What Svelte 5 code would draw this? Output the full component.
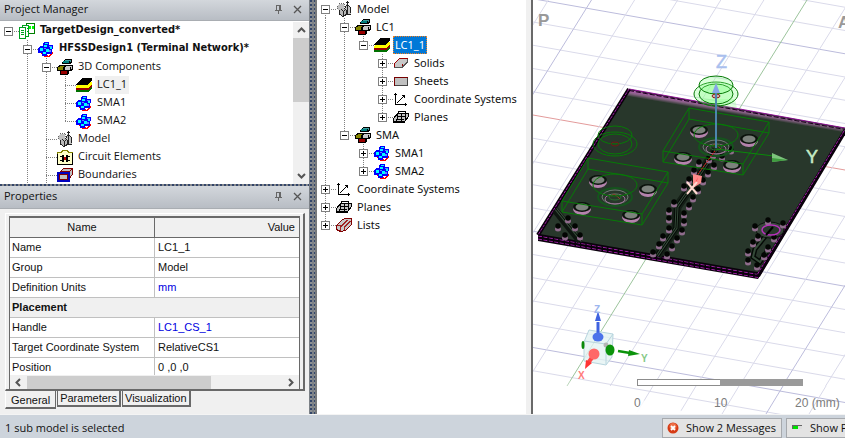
<script>
  const projectTree = [
    {
      label: 'TargetDesign_converted*', icon: 'project', open: true, bold: true, children: [
        {
          label: 'HFSSDesign1 (Terminal Network)*', icon: 'cubes', open: true, bold: true, more: true, children: [
            {
              label: '3D Components', icon: 'components', open: true, children: [
                { label: 'LC1_1', icon: 'layers', mark: 'soft' },
                { label: 'SMA1', icon: 'cubes' },
                { label: 'SMA2', icon: 'cubes' }
              ]
            },
            { label: 'Model', icon: 'model' },
            { label: 'Circuit Elements', icon: 'circuit' },
            { label: 'Boundaries', icon: 'boundary', more: true }
          ]
        }
      ]
    }
  ];

  const modelTree = [
    {
      label: 'Model', icon: 'model', open: true, children: [
        {
          label: 'LC1', icon: 'components', open: true, children: [
            {
              label: 'LC1_1', icon: 'layers', open: true, mark: 'selected', children: [
                { label: 'Solids', icon: 'solid', open: false },
                { label: 'Sheets', icon: 'sheet', open: false },
                { label: 'Coordinate Systems', icon: 'axes', open: false },
                { label: 'Planes', icon: 'planes', open: false }
              ]
            }
          ]
        },
        {
          label: 'SMA', icon: 'components', open: true, children: [
            { label: 'SMA1', icon: 'cubes', open: false },
            { label: 'SMA2', icon: 'cubes', open: false }
          ]
        }
      ]
    },
    { label: 'Coordinate Systems', icon: 'axes', open: false },
    { label: 'Planes', icon: 'planes', open: false },
    { label: 'Lists', icon: 'lists', open: false }
  ];

  // Turns a nested tree into rows, each with the guide line of every indent column.
  function flatten(nodes, guides = []) {
    return nodes.flatMap((node, i) => {
      const hasNext = i < nodes.length - 1 || node.more;
      const hasPrev = i > 0 || guides.length > 0;
      const own = hasNext ? (hasPrev ? 'full' : 'lower') : hasPrev ? 'upper' : 'none';
      return [
        { ...node, cells: [...guides, own] },
        ...flatten(node.children ?? [], [...guides, hasNext ? 'full' : 'none'])
      ];
    });
  }

  const projectRows = flatten(projectTree);
  const modelRows = flatten(modelTree);

  const properties = [
    { name: 'Name', value: 'LC1_1' },
    { name: 'Group', value: 'Model' },
    { name: 'Definition Units', value: 'mm', link: true },
    { group: 'Placement' },
    { name: 'Handle', value: 'LC1_CS_1', link: true },
    { name: 'Target Coordinate System', value: 'RelativeCS1' },
    { name: 'Position', value: '0 ,0 ,0' }
  ];

  const tabs = ['General', 'Parameters', 'Visualization'];
  let activeTab = $state('General');

  const range = (from, to) => Array.from({ length: to - from + 1 }, (_, i) => from + i);
  const rowLines = range(-10, 11).map((k) => ({ y: 115 + 23.25 * k, major: k % 5 === 0, axis: k === 0 }));
  const colLines = range(-6, 7).map((k) => ({ x: 807 + 43.1 * k, major: k % 5 === 0, axis: k === 0 }));

  const vias = [
    [699, 163], [694, 171], [689, 180], [684, 187], [674, 203], [669, 211], [669, 219], [669, 229], [663, 237],
    [659, 245], [653, 253], [709, 159], [714, 166], [708, 173], [703, 181], [698, 190], [693, 198], [689, 206],
    [684, 214], [684, 222], [682, 231], [677, 239], [672, 247], [667, 255], [568, 219], [558, 227], [575, 227],
    [565, 236], [580, 236], [755, 227], [768, 221], [783, 224], [758, 237], [753, 243], [748, 252], [748, 261],
    [774, 238], [768, 248], [764, 256], [757, 266], [731, 150], [722, 157], [713, 155]
  ];
  const pins = [[699, 131], [749, 140], [683, 158], [732, 166]];
</script>

{#snippet icon(name)}
  <svg class="icon" viewBox="0 0 16 16" shape-rendering="crispEdges" aria-hidden="true">
    {#if name === 'project'}
      <path d="M7.500 .5h8v10h-8z" fill="#fff" stroke="#008000" />
      <path d="M10 3h2v3h-2zM13 3h2v3h-2z" fill="#0f0" />
      <path d="M3.500 2.500h6v11h-6z" fill="#fff" stroke="#00a020" />
      <path d="M.5 4.500h6v11h-6z" fill="#fff" stroke="#00a020" />
      <path d="M2 7.500h3M2 9.500h3M2 11.500h3M8 5.500h1M8 8.500h1" stroke="#00a020" />
    {:else if name === 'cubes'}
      <path d="M2 11l5 4 2-1 2 1 4-5v3l-4 3H6z" fill="#f00" />
      <path d="M6 1h5v3h4v4h-1v5H9v2H4v-3H0V7l2-2h3V2z" fill="#00f" />
      <path d="M7 2h3v1H7zM6 4h3v2H6zM2 7h3v3H2zM8 8h3v3H8zM5 11h3v2H5zM12 6h2v2h-2z" fill="#0ff" />
      <path d="M11 5h3v1h-3zM6 7h2v1H6zM11 9h2v2h-2z" fill="#5b8cff" />
    {:else if name === 'components'}
      <path d="M5 3l3-3h7v3l-2 2H5z" fill="#000" /><path d="M6 2h6v2H6z" fill="#008080" /><path d="M8 1h6v1H8zM13 2h1v1h-1z" fill="#40a0a0" />
      <path d="M0 8l2-2h14v4l-2 2H0z" fill="#000" />
      <path d="M1 8h5v3H1zM3 7h4v1H3z" fill="#858500" /><path d="M8 8h5v3H8zM9 7h6v1H9zM14 8h1v2h-1z" fill="#c8c8c8" />
      <path d="M3 12h9v2l-2 2H3z" fill="#000" /><path d="M4 12h6v3H4z" fill="#900" />
    {:else if name === 'layers'}
      <path d="M0 14l4-5h12v2l-4 4H0z" fill="#007000" />
      <path d="M0 12l4-5h12v2l-4 4H0z" fill="#900" />
      <path d="M0 10l4-5h12v2l-4 4H0z" fill="#ff0" />
      <path d="M0 8l6-7h10v3l-5 4H0z" fill="#000" />
    {:else if name === 'model'}
      <path d="M1 5l2-2h5v6l-4 2-3-3z" fill="#c0c0c0" />
      <path d="M1.500 8V4.500M3 2.500h5M8.500 3v4" fill="none" stroke="#666" stroke-dasharray="1 1" />
      <path d="M11 2l4 7v4H9V8z" fill="#c4c4c4" />
      <path d="M3 9l3-2 4 2v5l-3 2-4-3z" fill="#b8b8b8" />
      <path d="M11.500 0v13M10 1.500h3M14.500 6v6M12.500 4l2 3M10.500 4l-2 4M5.500 8.500l2 2 2-2M7.500 10v5M3.500 9v4l3 2.500 4-2V9M11 13.500h4" fill="none" stroke="#222" />
    {:else if name === 'circuit'}
      <path d="M.5 3.500h4l1-2h5l1 2h4v12H.5z" fill="#ffffc8" stroke="#808000" />
      <path d="M1 15.500h14.500V4M.5 5v11" fill="none" stroke="#000" />
      <path d="M5 6h2v7H5zM9 6h2v7H9z" fill="#000" />
      <path d="M3 7.500h3M3 11.500h3M10 7.500h3M10 11.500h3" stroke="#000" /><path d="M7 8h2v3H7z" fill="#b00" />
    {:else if name === 'boundary'}
      <path d="M3.500 5l3-3.500h9v6l-3 3.500" fill="#c0c0c0" stroke="#800000" />
      <path d="M5 4.500h7.500v2M12.500 4.500l3-3" fill="none" stroke="#800000" />
      <path d="M1 6h11v8H1z" fill="#c0c0c0" stroke="#0000c0" stroke-width="2" />
      <path d="M2.500 7.500h8v5h-8z" fill="none" stroke="#800000" />
    {:else if name === 'solid'}
      <path d="M1 13V9l6-6h8v4l-6 6z" fill="#c8c8c8" />
      <path d="M1.500 13V8.500l5-5h8M9.500 12V9" fill="none" stroke="#900" /><path d="M1 12.500h8l5.500-5.500V3.500" fill="none" stroke="#555" />
    {:else if name === 'sheet'}
      <path d="M1.500 4.500h13v8h-13z" fill="#c0c0c0" stroke="#700" /><path d="M2 12.500h12.500V5" fill="none" stroke="#444" />
    {:else if name === 'axes'}
      <path d="M2.500 2v11.500H14M3.500 12.500l8-8" fill="none" stroke="#000" />
      <path d="M1 3h3v1H1zM12 12h1v3h-1zM9 4h3v3h-1V5H9z" fill="#000" />
    {:else if name === 'planes'}
      <path d="M.5 9.500l4-5h11v3l-4 5.500h-11z" fill="#c4c4c4" stroke="#000" />
      <path d="M.5 12.500h11l4-5M3.500 7.500h9M5.500 2.500h7v9M5.500 2.500l-2 10M3 10.500h8M8.500 5v8" fill="none" stroke="#000" />
    {:else if name === 'lists'}
      <path d="M.5 8.500l6-6 3-1h6v6l-6 6-5 1-4-2z" fill="#c8c8c8" stroke="#800000" />
      <path d="M4.500 14v-4l7-7M8.500 13v-3l6-6M1 8.500h6" fill="none" stroke="#a02020" />
    {/if}
  </svg>
{/snippet}

{#snippet tree(rows)}
  <ul class="rows">
    {#each rows as row}
      <li>
        {#each row.cells as cell, i}
          <span class="cell {cell}" class:own={i === row.cells.length - 1}>
            {#if i === row.cells.length - 1 && row.open !== undefined}
              <button class="expander" class:closed={!row.open} aria-label="Toggle {row.label}"></button>
            {/if}
          </span>
        {/each}
        {@render icon(row.icon)}
        <span class="label {row.mark ?? ''}" class:bold={row.bold}>{row.label}</span>
      </li>
    {/each}
  </ul>
{/snippet}

{#snippet titleBar(title)}
  <header>
    <h2>{title}</h2>
    <button aria-label="Pin {title}">
      <svg viewBox="0 0 9 9" shape-rendering="crispEdges"><path d="M2.500 5V.5h4V5M5.500 1v4M1 5.500h7M4.500 6v3" fill="none" stroke="#666" /></svg>
    </button>
    <button aria-label="Close {title}">
      <svg viewBox="0 0 9 9"><path d="M1 1l7 7M8 1L1 8" stroke="#555" stroke-width="1.300" /></svg>
    </button>
  </header>
{/snippet}

{#snippet chevron(d)}
  <svg class="chevron" viewBox="0 0 9 9" aria-hidden="true"><path {d} fill="none" stroke="#555" stroke-width="2" /></svg>
{/snippet}

{#snippet wireBox()}
  <path d="M689 108l80 14v11l-80-14zM663 151l80 13v11l-80-13zM689 108l-26 43M769 122l-26 42M689 119l-26 43M769 133l-26 42" />
  <ellipse cx="716" cy="135" rx="22" ry="11" />
{/snippet}

{#snippet connector()}
  {#each pins as [x, y]}
    <ellipse cx={x} cy={y + 1} rx="9" ry="6" fill="#b583ad" />
    <ellipse cx={x} cy={y - 1} rx="9" ry="5" fill="#0c130d" />
    <ellipse cx={x} cy={y - 1} rx="6.500" ry="3.500" fill="#7c827c" />
  {/each}
  <g fill="none">
    <ellipse cx="716" cy="147" rx="17" ry="9" stroke="#15541d" stroke-width="2" />
    <ellipse cx="716" cy="147" rx="13" ry="7" stroke="#6f7d73" />
    <ellipse cx="716" cy="149" rx="10" ry="5" stroke="#a06f9a" />
    <ellipse cx="716" cy="147" rx="6" ry="3" stroke="#2a6b30" />
  </g>
  <path d="M712 146l3-2 4 3 2 2" fill="none" stroke="#8c3b2c" />
  <g fill="none" stroke="#067a06">{@render wireBox()}</g>
{/snippet}

<div class="app">
  <main>
    <div class="side">
      <section class="project">
        {@render titleBar('Project Manager')}
        <div class="project-body">
          {@render tree(projectRows)}
          <div class="vscroll">
            {@render chevron('M1 6l3.500-3.500L8 6')}
            <div class="track"><div class="thumb"></div></div>
            {@render chevron('M1 3l3.500 3.500L8 3')}
          </div>
        </div>
      </section>

      <div class="hsplit"></div>

      <section class="properties">
        {@render titleBar('Properties')}
        <div class="sheet">
          <div class="frame">
            <div class="grid">
              <div class="clip">
                <table>
                  <thead>
                    <tr><th scope="col" class="name">Name</th><th scope="col" class="value">Value</th></tr>
                  </thead>
                  <tbody>
                    {#each properties as p}
                      {#if p.group}
                        <tr class="group"><th scope="rowgroup" colspan="2">{p.group}</th></tr>
                      {:else}
                        <tr><td>{p.name}</td><td class:link={p.link}>{p.value}</td></tr>
                      {/if}
                    {/each}
                  </tbody>
                </table>
              </div>
              <div class="hscroll">
                {@render chevron('M6 1L2.500 4.500 6 8')}
                <div class="track"><div class="thumb"></div></div>
                {@render chevron('M3 1l3.500 3.500L3 8')}
              </div>
            </div>
          </div>
          <div class="tabs" role="tablist">
            {#each tabs as tab}
              <button role="tab" aria-selected={tab === activeTab} class:active={tab === activeTab} onclick={() => (activeTab = tab)}>{tab}</button>
            {/each}
          </div>
        </div>
      </section>
    </div>

    <div class="vsplit"></div>

    <nav class="model" aria-label="Model tree">{@render tree(modelRows)}</nav>

    <svg class="view" viewBox="533 0 312 414" preserveAspectRatio="xMinYMin slice" role="img" aria-label="3D model view">
      <defs>
        <linearGradient id="rear" gradientUnits="userSpaceOnUse" x1="740" y1="109" x2="739" y2="115">
          <stop offset="0" stop-color="#b060b0" /><stop offset=".5" stop-color="#80607e" /><stop offset="1" stop-color="#28372b" />
        </linearGradient>
        <linearGradient id="fade" x1="0" y1="0" x2="0" y2="1">
          <stop offset="0" stop-color="#fff" stop-opacity="0" /><stop offset="1" stop-color="#fff" />
        </linearGradient>
      </defs>

      <g fill="none">
        {#each rowLines as l}
          <path d="M533 {l.y}l312 55" stroke={l.axis ? '#e39b9b' : l.major ? '#bcbcdc' : '#dadaea'} />
        {/each}
        {#each colLines as l}
          <path d="M{l.x} 0L{l.x - 240} 386" stroke={l.axis ? '#9cc49c' : l.major ? '#bcbcdc' : '#dadaea'} />
        {/each}
        <path d="M653 386l-17 28M696 386l-17 28M739 386l-17 28M826 386l-17 28" stroke="#dadaea" />
        <path d="M783 386l-17 28" stroke="#bcbcdc" />
      </g>
      <path d="M533 370l160 44H533z" fill="url(#fade)" />

      <g font-family="Liberation Sans, Arial, sans-serif" font-weight="bold" font-size="17" fill="#999">
        <text x="538" y="26">P</text><text x="838" y="28">A</text>
      </g>

      <path d="M629 89l216 39v5l-87 146-220-38v-6z" fill="#0a000c" />
      <path d="M629 90l216 38v4l-87 142-220-39z" fill="#28372b" />
      <path d="M629 90l216 39v7L627 96z" fill="url(#rear)" />
      <path d="M538 236l220 38.500M538 239l220 38.500" stroke="#a01fa6" stroke-dasharray="4 1.500" fill="none" />
      <path d="M538 237.500l220 38.500M538 234.500l220 38.500" stroke="#0a000c" stroke-width="1.500" fill="none" />
      <path d="M629 89l216 39" stroke="#8c0f92" fill="none" /><path d="M629 90.500l216 39" stroke="#170019" stroke-dasharray="5 2" fill="none" />
      <path d="M629 89l-91 146M845 131l-87 145" stroke="#0a000c" stroke-width="4" fill="none" />
      <path d="M629 89l-91 146M844 131l-87 144" stroke="#a01fa6" stroke-dasharray="3 1" fill="none" />

      <g fill="none" stroke="#050a06">
        <path d="M716 150l-25 37-14 20-1 21-19 28" stroke-width="9" stroke="#152017" />
        <path d="M716 150l-25 37-14 20-1 21-19 28" stroke-width="5" />
        <path d="M716 150l-25 37-14 20-1 21-19 28" stroke-width="3" stroke="#344a38" />
        <path d="M716 150l-25 37-14 20-1 21-19 28" />
        <path d="M555 210l25 31" stroke-width="7" stroke="#0d150f" />
        <path d="M556 209l26 32" stroke-width="3" stroke="#344a38" /><path d="M556 209l26 32" />
        <path d="M768 233l-13 16-2 8 7 5 10-15" stroke-width="5" />
        <path d="M768 233l-13 16-2 8 7 5 10-15" stroke-width="2" stroke="#344a38" />
      </g>
      <ellipse cx="770" cy="230" rx="14" ry="8" fill="#38453b" stroke="#0a120b" />
      {#each vias as [x, y]}
        <ellipse cx={x} cy={y + 2} rx="3" ry="2.500" fill="#8f6c8c" />
        <circle cx={x} cy={y - 1} r="2.700" fill="#030503" />
      {/each}
      <ellipse cx="771" cy="230" rx="9" ry="5" fill="#28372b" stroke="#b832bd" stroke-width="1.500" />
      <path d="M773 227l-7 8" stroke="#000" stroke-width="2" />

      {@render connector()}
      <g transform="translate(-101 50)">
        {@render connector()}
        <g fill="none" stroke="#067a06">
          <ellipse cx="716" cy="94" rx="22" ry="12" /><ellipse cx="716" cy="94" rx="17" ry="10" /><ellipse cx="716" cy="85" rx="17" ry="9" />
        </g>
        <ellipse cx="716" cy="94" rx="4" ry="2" fill="none" stroke="#701818" />
      </g>

      <g fill="#8f8" fill-opacity=".3" stroke="#067a06">
        <path d="M700 99h35l2 9-15-1z" stroke="none" />
        <ellipse cx="716" cy="94" rx="22" ry="12" /><ellipse cx="716" cy="94" rx="17" ry="10" /><ellipse cx="716" cy="85" rx="17" ry="9" />
      </g>
      <ellipse cx="716" cy="96" rx="4" ry="2" fill="#caa" stroke="#8a1b1b" />
      <path d="M716 148V92" stroke="#4c86ad" stroke-width="2" />
      <path d="M716 83l-4 10h8z" fill="#86a4e8" />
      <path d="M716 149l58 7" stroke="#0a8a0a" fill="none" />
      <path d="M772 153l16 7-16 2z" fill="#7cc47c" /><path d="M772 158l16 2-16 2z" fill="#3f9d3f" />
      <path d="M715 151l-20 27" stroke="#d11" stroke-dasharray="2 1" fill="none" />
      <path d="M693 174l9 2-1 7-8 5z" fill="#ff8a8a" /><path d="M698 177l-2 7-3 4z" fill="#f33" />
      <path d="M687 182l10 12M697 182l-10 12" stroke="#ffd9d0" stroke-width="2" />
      <g font-family="Liberation Sans, Arial, sans-serif" font-size="18">
        <text x="716" y="68" fill="#a9bfee" stroke="#a9bfee" stroke-width=".5">Z</text>
        <text x="806" y="163" fill="#c4ecc4" stroke="#c4ecc4" stroke-width=".5">Y</text>
      </g>

      <path d="M584 342l5-12 24 4-1 23-6 8-22-4z" fill="#e4f3f3" fill-opacity=".8" stroke="#b7d5de" />
      <path d="M584 341l22 3v20M606 344l7-10" fill="none" stroke="#b7d5de" />
      <ellipse cx="583" cy="345" rx="1.500" ry="4" fill="#0a8a0a" />
      <path d="M598 336v-14" stroke="#3f62e0" stroke-width="3" /><path d="M598 311l-3 10h6z" fill="#3f62e0" />
      <ellipse cx="598" cy="337" rx="5.500" ry="4.500" fill="#4d73ea" />
      <circle cx="606" cy="345" r="2.500" fill="#b5b5b5" />
      <ellipse cx="610" cy="350" rx="4.500" ry="5.500" fill="#0b930b" />
      <path d="M618 351l12 2" stroke="#0b930b" stroke-width="2.500" /><path d="M629 350l11 4-12 2z" fill="#0b930b" />
      <path d="M594 355l-6 8" stroke="#f44" stroke-width="4" /><path d="M586 360l6 3-7 6z" fill="#f33" />
      <circle cx="594" cy="354" r="5.500" fill="#ff6868" />
      <g font-family="Liberation Sans, Arial, sans-serif" font-size="10" font-weight="bold">
        <text x="594" y="313" fill="#9db6ee">Z</text>
        <text x="641" y="362" fill="#86c986">Y</text>
        <text x="578" y="379" fill="#ff7b7b">X</text>
      </g>

      <rect x="637.500" y="379.500" width="83" height="6" fill="#fff" stroke="#8c8c8c" />
      <rect x="720" y="379" width="83" height="7" fill="#9a9a9a" />
      <g font-family="Liberation Sans, Arial, sans-serif" font-size="12" fill="#7c7c7c">
        <text x="634" y="407">0</text><text x="714" y="407">10</text><text x="795" y="407">20 (mm)</text>
      </g>
    </svg>
  </main>

  <footer>
    <output>1 sub model is selected</output>
    <div class="actions">
      <button>
        <svg viewBox="0 0 12 12" aria-hidden="true">
          <circle cx="6" cy="6" r="5.500" fill="#d63a14" /><circle cx="6" cy="4.500" r="3.500" fill="#ee7048" />
          <path d="M4 4l4 4M8 4L4 8" stroke="#fff" stroke-width="1.800" />
        </svg>
        Show 2 Messages
      </button>
      <button>
        <svg viewBox="0 0 12 12" shape-rendering="crispEdges" aria-hidden="true">
          <path d="M1 7V3h10" fill="none" stroke="#666" /><path d="M2 4h9v3H2z" fill="#ddd" /><path d="M2 4h5v3H2z" fill="#00e000" />
        </svg>
        Show Progress
      </button>
    </div>
  </footer>
</div>

<style>
  :global(body) { margin: 0; }
  .app {
    display: flex; flex-direction: column; height: 100vh; overflow: hidden;
    background: #f0f0f0; color: #111;
    font: 11px/18px "Open Sans", "Noto Sans", sans-serif;
  }
  .app * { box-sizing: border-box; }
  button { font: inherit; color: inherit; margin: 0; padding: 0; border: 0; background: none; }
  main { flex: 1; display: flex; min-height: 0; }
  .side { flex: 0 0 309px; display: flex; flex-direction: column; min-height: 0; }

  header {
    flex: none; display: flex; align-items: center; height: 21px; gap: 10px; padding: 0 7px 2px 4px;
    background: linear-gradient(#d3d7dc, #b8bdc4); border-bottom: 1px solid #a9adb2;
  }
  h2 { flex: 1; margin: 0; font-size: 11px; font-weight: normal; line-height: 18px; }
  header button { width: 9px; height: 9px; display: flex; }
  header svg { width: 9px; height: 9px; }

  .project { flex: 0 0 183px; display: flex; flex-direction: column; }
  .project-body { flex: 1; display: flex; min-height: 0; background: #fff; padding-top: 1px; }
  .rows { flex: 1; min-width: 0; margin: 0; padding: 0; list-style: none; overflow: hidden; }
  .rows li { display: flex; align-items: center; height: 18px; white-space: nowrap; }
  .cell { position: relative; flex: none; width: 19px; height: 18px; }
  .cell::before {
    content: ""; position: absolute; left: 8px; top: 0; width: 1px; height: 18px;
    background: repeating-linear-gradient(#808080 0 1px, transparent 1px 2px);
  }
  .cell.none::before { display: none; }
  .cell.upper::before { height: 9px; }
  .cell.lower::before { top: 9px; height: 9px; }
  .own::after {
    content: ""; position: absolute; left: 8px; top: 9px; width: 11px; height: 1px;
    background: repeating-linear-gradient(90deg, #808080 0 1px, transparent 1px 2px);
  }
  .expander {
    position: absolute; z-index: 1; left: 4px; top: 5px; width: 9px; height: 9px;
    border: 1px solid #808080;
    background: linear-gradient(#000, #000) center / 5px 1px no-repeat, #fff;
  }
  .expander.closed {
    background: linear-gradient(#000, #000) center / 5px 1px no-repeat, linear-gradient(#000, #000) center / 1px 5px no-repeat, #fff;
  }
  .icon { flex: none; width: 16px; height: 16px; }
  .label { margin-left: 3px; padding: 0 2px; line-height: 18px; }
  .project .label { line-height: 16px; padding-bottom: 2px; }
  .bold { font-family: "DejaVu Sans Condensed", "DejaVu Sans", sans-serif; font-weight: bold; }
  .soft { background: #f0f0f0; }
  .selected { background: #0078d7; color: #fff; outline: 1px dotted #f08020; outline-offset: -1px; }

  .vscroll { flex: 0 0 16px; display: flex; flex-direction: column; align-items: center; background: #f0f0f0; padding: 4px 0; }
  .vscroll .track { flex: 1; width: 16px; padding-top: 3px; }
  .vscroll .thumb { height: 64px; background: #cdcdcd; }
  .chevron { flex: none; width: 9px; height: 9px; }

  .hsplit { flex: 0 0 2px; background: repeating-linear-gradient(90deg, #33466a 0 2px, #85888c 2px 4px); }
  .vsplit {
    flex: 0 0 8px; border-right: 2px solid #77797b;
    background: linear-gradient(90deg, #7c8187 1px, transparent 1px 3px, #7c8187 3px 4px, transparent 4px) 0 0 / 4px 4px,
      repeating-linear-gradient(#33466a 0 2px, #8b8f94 2px 4px);
  }

  .properties { flex: 1; display: flex; flex-direction: column; min-height: 0; }
  .properties header { height: 23px; }
  .sheet { flex: 1; display: flex; flex-direction: column; min-height: 0; padding: 4px 4px 5px 5px; font-family: "Liberation Sans", Arial, sans-serif; }
  .frame { flex: 1; min-height: 0; display: flex; padding: 2px 3px 0; border: 1px solid #fff; border-right: 2px solid #696969; border-bottom: 2px solid #696969; }
  .grid { flex: 1; min-width: 0; display: flex; flex-direction: column; border: 1px solid #696969; border-top-width: 2px; border-bottom: 0; background: #fff; }
  .clip { flex: 1; min-height: 0; overflow: hidden; }
  table { width: 100%; border-collapse: separate; border-spacing: 0; table-layout: fixed; }
  td, th { height: 20px; padding: 0 2px; line-height: 19px; white-space: nowrap; text-align: left; border-bottom: 1px solid #c0c0c0; }
  td:first-child { border-right: 1px solid #c0c0c0; }
  td:last-child { padding-left: 3px; }
  thead th { background: #f0f0f0; font-weight: normal; border-bottom: 1px solid #696969; }
  thead .name { width: 145px; text-align: center; border-right: 1px solid #696969; }
  thead .value { text-align: right; padding-right: 4px; }
  .group th { background: #f0f0f0; }
  .link { color: #0000e0; }
  .hscroll { flex: 0 0 14px; display: flex; align-items: center; gap: 4px; padding: 0 4px; background: #f0f0f0; }
  .hscroll .track { flex: 1; }
  .hscroll .thumb { width: 72%; height: 13px; background: #cdcdcd; }
  .tabs { flex: none; display: flex; align-items: flex-start; gap: 1px; height: 18px; }
  .tabs button { height: 16px; padding: 0 2px; line-height: 14px; border: 1px solid #696969; border-right-width: 2px; border-bottom-width: 2px; border-top: 0; }
  .tabs button.active { height: 18px; padding: 0 5px; line-height: 18px; border-color: #fff #696969 #696969 #fff; border-right-width: 1px; }

  .model {
    flex: 0 0 216px; min-width: 0; background: #fff; font-family: "Noto Sans", "Open Sans", sans-serif;
    border-right: 2px solid #696969; box-shadow: inset -5px 0 #f0f0f0;
  }
  .view { flex: 1; min-width: 0; width: 100%; height: 100%; background: #fff; }

  footer {
    flex: 0 0 24px; display: flex; justify-content: space-between; padding: 3px 0 0 5px;
    background: #cdd4dc; border-top: 1px solid #f4f4f4; white-space: nowrap;
  }
  footer output { line-height: 20px; }
  .actions { display: flex; gap: 4px; width: 183px; overflow: hidden; }
  .actions button { flex: none; display: flex; align-items: center; gap: 7px; width: 120px; height: 20px; padding: 0 4px; background: #e3e3e3; border: 1px solid #a6a9ad; }
  .actions svg { width: 12px; height: 12px; }
</style>
